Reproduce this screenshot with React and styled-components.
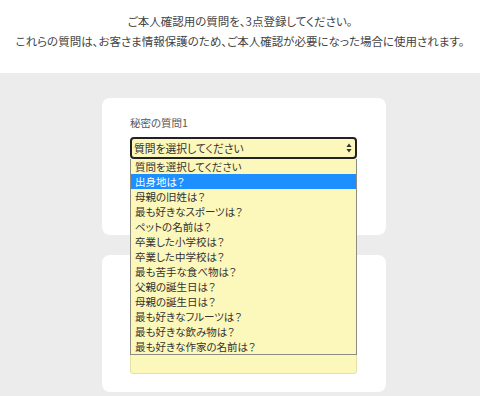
import { styled, createGlobalStyle } from "styled-components";

const questions = [
  "質問を選択してください",
  "出身地は？",
  "母親の旧姓は？",
  "最も好きなスポーツは？",
  "ペットの名前は？",
  "卒業した小学校は？",
  "卒業した中学校は？",
  "最も苦手な食べ物は？",
  "父親の誕生日は？",
  "母親の誕生日は？",
  "最も好きなフルーツは？",
  "最も好きな飲み物は？",
  "最も好きな作家の名前は？",
];

function App() {
  return (
    <Container>
      <GlobalStyle />
      <Header>
        <Lead>ご本人確認用の質問を、3点登録してください。</Lead>
        <Lead>これらの質問は、お客さま情報保護のため、ご本人確認が必要になった場合に使用されます。</Lead>
      </Header>
      <Main>
        <Card>
          <Label>秘密の質問1</Label>
          <SelectWrap>
            <Select>
              <span>質問を選択してください</span>
              <Arrows width="6" height="10" viewBox="0 0 6 10">
                <path d="M3 0.5 L5.6 4 L0.4 4 Z M3 9.5 L5.6 6 L0.4 6 Z" fill="#333" />
              </Arrows>
            </Select>
            <OptionList>
              {questions.map((q, i) => (
                <Option key={q} active={i === 1}>{q}</Option>
              ))}
            </OptionList>
          </SelectWrap>
          <Label>答え</Label>
          <Input />
        </Card>
        <Card>
          <Label>秘密の質問2</Label>
          <SelectWrap>
            <Select>
              <span>質問を選択してください</span>
            </Select>
          </SelectWrap>
          <Label>答え</Label>
          <Input />
        </Card>
      </Main>
    </Container>
  );
}

const GlobalStyle = createGlobalStyle`
body{
margin:0;
font-family:"Noto Sans CJK JP","Noto Sans",sans-serif;
color:#333;
}
`;

const Container = styled.div`
width:480px;
height:396px;
overflow:hidden;
background-color:#ececec;
`;

const Header = styled.div`
background-color:#fff;
height:73px;
box-sizing:border-box;
padding-top:11px;
display:flex;
flex-direction:column;
align-items:center;
`;

const Lead = styled.p`
margin:0;
font-size:11.5px;
line-height:20px;
color:#444;
font-feature-settings:"palt";
white-space:nowrap;
`;

const Main = styled.div`
display:flex;
flex-direction:column;
align-items:center;
gap:20px;
padding:25px 0 0 8px;
`;

const Card = styled.div`
width:284px;
box-sizing:border-box;
background-color:#fff;
border-radius:8px;
padding:18px 29px 18px 28px;
display:flex;
flex-direction:column;
`;

const Label = styled.div`
font-size:10.5px;
line-height:14px;
color:#555;
font-feature-settings:"palt";
margin-bottom:7px;
`;

const SelectWrap = styled.div`
position:relative;
margin-bottom:15px;
`;

const Select = styled.div`
height:22px;
box-sizing:border-box;
border:2px solid #222;
border-radius:4px;
background-color:#fcf7bb;
display:flex;
align-items:center;
justify-content:space-between;
padding:0 3px 0 2px;
font-size:10.8px;
font-feature-settings:"palt";
`;

const Arrows = styled.svg`
display:block;
`;

const OptionList = styled.ul`
position:absolute;
top:100%;
left:0;
right:0;
margin:0;
padding:0;
list-style:none;
background-color:#fcf7bb;
border:1px solid #8c8c80;
border-top:none;
z-index:2;
`;

const Option = styled.li`
height:15px;
line-height:15px;
padding-left:4px;
font-size:10.5px;
font-feature-settings:"palt";
color:${(props) => (props.active ? "#fff" : "#333")};
background-color:${(props) => (props.active ? "#1e8fff" : "transparent")};
white-space:nowrap;
`;

const Input = styled.div`
height:22px;
box-sizing:border-box;
border:1px solid #e6dfa6;
border-radius:3px;
background-color:#fcf7bb;
`;

export default App;
